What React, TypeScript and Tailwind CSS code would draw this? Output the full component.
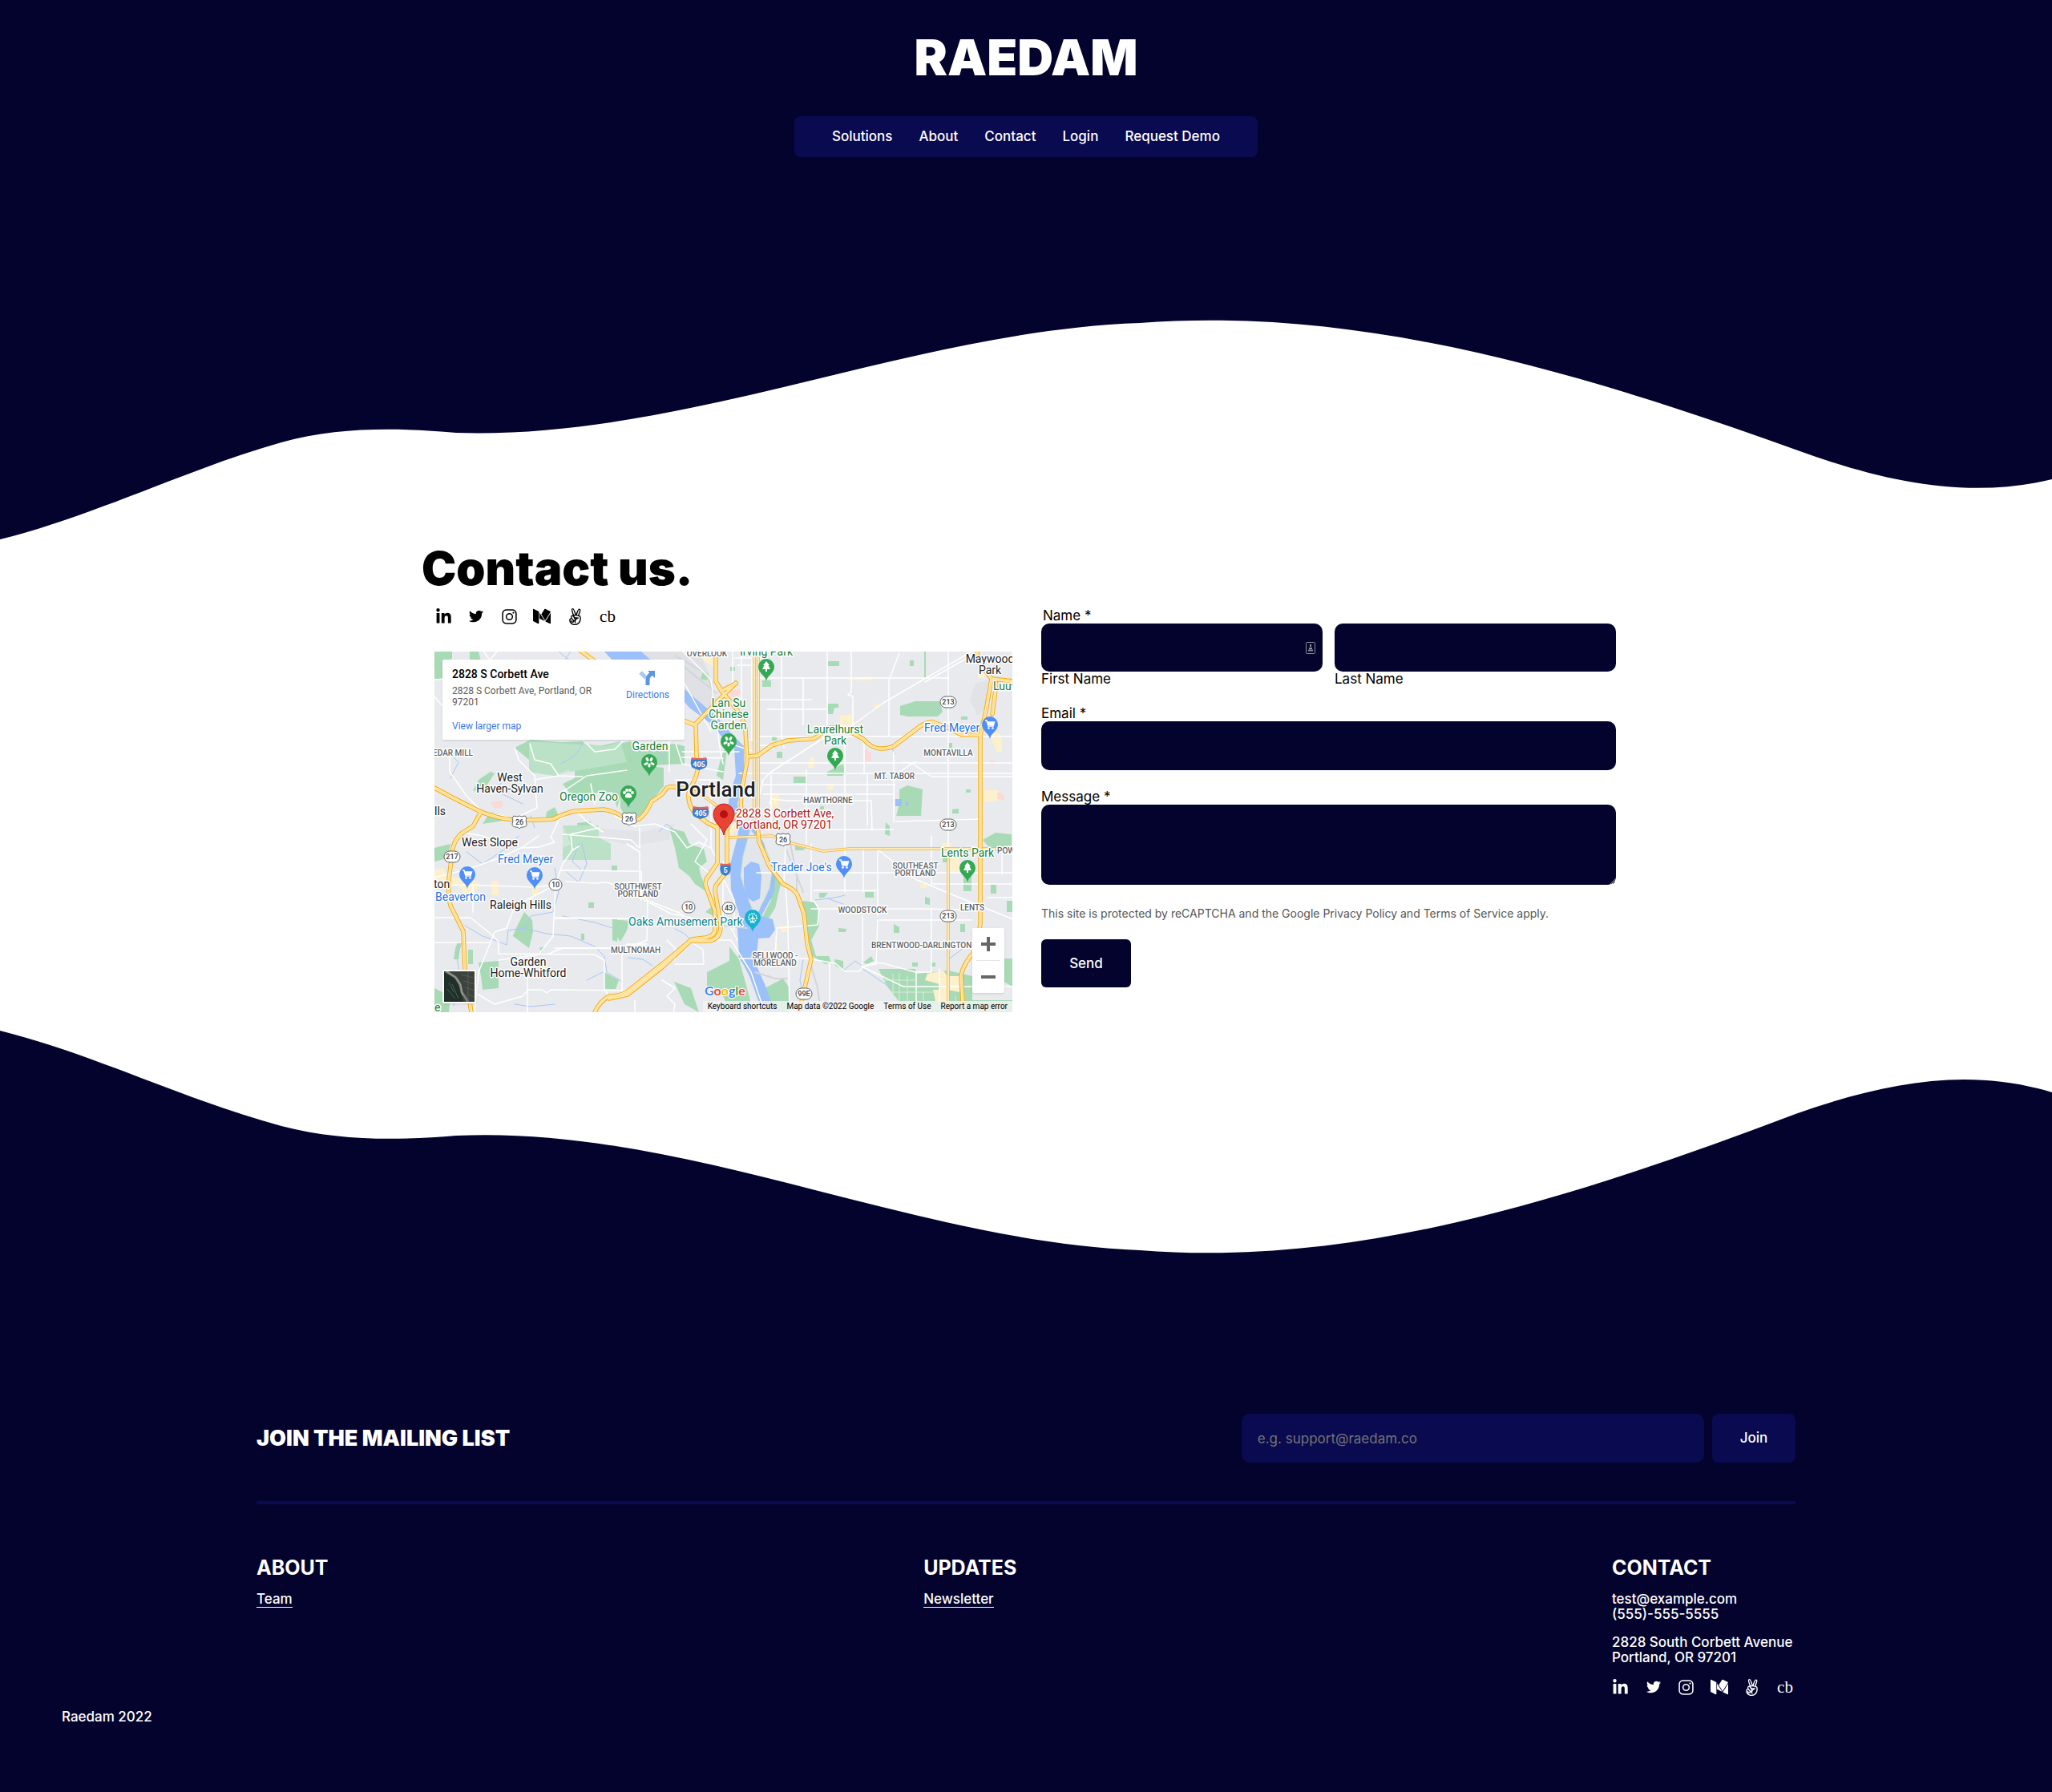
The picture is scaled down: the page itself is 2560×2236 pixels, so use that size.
import type { ReactNode } from "react";
import { FaAngellist, FaLinkedinIn, FaTwitter } from "react-icons/fa";
import { IoLogoInstagram } from "react-icons/io5";

type Pt = [number, number];

const TOP_WAVE =
  "M0 277C117 248 234 189 351 156C424 136 497 138 569 144C853 153 1138 17 1422 7C1695-14 1967 67 2240 165C2347 204 2453 228 2560 202V0H0Z";

const BOTTOM_WAVE =
  "M0 2C117 31 234 90 351 121C424 140 497 139 569 133C853 120 1138 265 1422 276C1695 298 1967 209 2240 106C2347 68 2453 46 2560 79V280H0Z";

function Wave({ shape }: { shape: string }) {
  return (
    <svg aria-hidden="true" viewBox="0 0 2560 280" preserveAspectRatio="none" className="block h-[280px] w-full bg-white">
      <path d={shape} fill="#03032e" />
    </svg>
  );
}

function MediumIcon() {
  return (
    <svg viewBox="0 0 1792 1792" fill="currentColor" className="h-[22px] w-[22px]">
      <path d="M597 421v1173q0 25-12.500 42.500t-36.500 17.500q-17 0-33-8l-465-233q-21-10-35.500-33.500t-14.500-46.500v-1140q0-20 10-34t29-14q14 0 44 15l511 256q3 3 3 5zM661 522l534 866-534-266v-600zM1792 540v1054q0 25-14 40.500t-38 15.500-47-13l-441-220zM1789 420q0 3-256.500 419.500t-300.500 487.500l-390-634 324-527q17-28 52-28 14 0 26 6l541 270q4 2 4 6z" />
    </svg>
  );
}

function SocialLinks() {
  const links: { name: string; icon: ReactNode }[] = [
    { name: "LinkedIn", icon: <FaLinkedinIn className="size-[21px]" /> },
    { name: "Twitter", icon: <FaTwitter className="size-[18px]" /> },
    { name: "Instagram", icon: <IoLogoInstagram className="size-[21px]" /> },
    { name: "Medium", icon: <MediumIcon /> },
    { name: "AngelList", icon: <FaAngellist className="size-[21px]" /> },
    { name: "Crunchbase", icon: <span className="font-['Liberation_Serif',serif] text-[21px] leading-5">cb</span> },
  ];
  return (
    <div className="flex h-6 items-center gap-[19px]">
      {links.map((l) => (
        <a key={l.name} href="#" aria-label={l.name} className="flex w-[22px] justify-center">
          {l.icon}
        </a>
      ))}
    </div>
  );
}

const FREEWAYS = [
  "M0 170L24 183 58 200Q80 209 101 210T148 209Q162 202 175 199L211 197Q224 199 235 206T255 209Q264 203 271 187L284 178 290 170Q296 167 303 170L325 171",
  "M58 200L48 218 35 226Q26 233 23 245L18 284Q17 305 20 317L36 349 38 397 46 450",
  "M181 -2L200 12",
  "M351 -2V37L358 49 373 67Q386 82 388 97L390 137 385 164Q381 180 383 200L365 214",
  "M376 39L326 90 327 130Q333 150 318 172 314 188 325 202L341 214 353 220",
  "M308 85L326 92",
  "M353 217V264L339 284 338 291 350 324V346Q350 355 338 357L321 359 288 387 241 424Q232 430 218 430 206 436 199 452",
  "M365 217V274L351 292 350 298 357 340Q358 360 341 361L319 361 284 394 241 428 218 433",
  "M391 131L403 130 421 117 441 111 471 109Q480 107 488 96 500 92 515 98L535 109Q545 121 557 121 567 121 573 118L601 97Q612 87 622 88L640 95 658 104 680 104",
  "M403 217L405 237 418 268 435 290Q450 297 453 304L461 327 465 364 470 384 458 437 455 452",
  "M676 -2L680 14 695 34 688 74 681 104V340L676 372Q660 388 657 404L660 452",
  "M695 34L722 37",
  "M701 40L696 78",
  "M358 49L376 40",
];

const ARTERIALS = [
  "M399 -2V216",
  "M404 -2V216",
  "M368 232L421 230 445 239 485 249 518 246 722 246",
  "M641 246V452",
  "M318 172Q340 180 360 200",
];

const STREETS = [
  "M401 33H641", "M415 72H490", "M403 106H722", "M403 117H430", "M403 139H721", "M380 152L430 152 722 152", "M410 166H575", "M410 178H573", "M420 184L440 186 545 186 546 223",
  "M433 -2V104L436 120", "M460 34V92", "M490 -2V94", "M520 -2V50L516 54 522 56V100", "M567 105V36L580 2", "M641 -2V246", "M573 125V212", "M512 105V152", "M536 108V152",
  "M670 0L560 64 520 93 490 105 420 150 410 160 404 186", "M670 5L612 38", "M512 152V300", "M464 148V240", "M420 154V216", "M540 217V152", "M420 184L418 190",
  "M401 60H470", "M575 212L681 209", "M490 222H573", "M585 138L597 140 620 156H721", "M573 155L600 137",
  "M402 276H721", "M473 298H553", "M553 247V330", "M553 247L600 284 650 305 722 334", "M553 335L551 390 533 393", "M535 245V300", "M534 330V390", "M470 321H600L670 322", "M555 335H670",
  "M427 345L478 341 480 322 474 312 470 311V240", "M427 345L425 380", "M438 290L441 340 443 450", "M438 240L436 288", "M380 383H465L500 389 512 399 530 399Q538 386 560 389L600 400",
  "M533 393L585 418H721", "M493 389V450", "M601 418V400H620V320", "M601 418V450", "M620 230V290H721", "M630 396V440", "M708 250V278", "M690 307H721", "M641 400V418",
  "M0 292L40 291 125 294 151 291", "M0 282L40 272 80 258 110 244 130 230", "M151 290L160 265 172 248 170 228 205 220", "M164 287L200 289 215 288 255 300 262 310 295 327 320 332",
  "M157 273L235 274 258 274V302L266 310 265 360 240 370H150", "M150 332L235 333 M265 310L310 328", "M151 291L148 355 130 378 80 385M150 333H250", "M151 291L100 318 90 345 75 350 55 400 50 450",
  "M0 332H45L70 352 80 362V377L200 378 212 385", "M0 363H70", "M48 292V325", "M212 385V420L220 435", "M140 378L160 370H270", "M117 422L110 430 75 440 50 425 M117 422L135 422 140 426 145 422 240 423", "M116 405V450",
  "M234 380V430 M250 435V450", "M234 380L240 365H265", "M300 385L300 370 290 360 M320 362L335 372 336 390H300", "M240 240L256 250V302L258 310", "M180 243L172 248 M256 220V245L245 235 160 228", "M284 410L300 420 290 430 300 440 298 452",
  "M0 56L20 80 40 95 M0 35L50 32 80 -2", "M60 -2L90 40 60 60", "M19 125V150L40 180 55 195", "M100 120L105 135 125 155 128 195 100 208 60 200", "M119 115L125 135 145 140 155 155 185 156M155 155L125 160",
  "M190 115L200 125 225 122 235 112", "M160 175L190 155 225 150 240 148 M195 165L200 190 M178 200L190 212 210 225 M175 199L155 210 145 232",
  "M145 232L150 238 130 244 110 245 M35 226L60 230 80 238", "M293 112V150 M301 115L309 140 360 150 M309 125H380 M309 132L360 133",
  "M225 205L250 218 275 215 300 225 315 245 330 238 345 245 M320 215L340 235 325 262 342 276 340 300", "M345 217V245L358 270", "M310 0L345 35 356 120 360 140 M300 18L345 100", "M345 217V160 M353 160H300",
  "M360 262V345 M360 283L374 310V347 M353 360L370 360 395 400 412 450 M370 345L378 360", "M372 0V40 M383 0V60 M396 10V110", "M375 8H415 M378 17H400", "M393 110L405 112 M375 117L400 125",
];

const PARKS = [
  "M0 0H22V8L12 22V34H0Z", "M44 0H55L58 12H44Z", "M120 110L215 118 245 112 250 120 300 115 312 118V140L270 142 245 170 232 180 228 195 222 175 170 178 160 165 175 158 175 145 160 150 150 155 118 150 118 135 100 120Z",
  "M120 115L145 122 160 138 170 150 190 145 230 150 240 138 232 112 205 118 195 126 185 112Z", "M232 150L262 142 286 145V168L268 190 258 205 240 208 232 195Z",
  "M55 160L70 150 75 152 62 172 48 174Z", "M140 200L150 194 155 205 145 212H138Z M178 214L195 212 196 236 180 228Z", "M160 217H205V232L220 240V260H160V245L170 240Z", "M293 220L312 225 318 240 336 246 340 262 330 270 332 278 340 300 325 290 318 280 305 270 300 245Z",
  "M102 345L112 325 122 335 123 350 118 370 98 355Z", "M222 334L243 336 240 348 232 362 225 352Z M222 334H228V362L222 360Z", "M55 388L80 386V420L60 422 58 405Z", "M0 420L20 430 18 450H0Z M60 215L70 200 95 208 80 212Z",
  "M26 370L29 363H33L30 384H24Z M42 372H48V390H42Z M183 352H187V360H183Z M192 313H199V320H192Z M221 267H228V274H221Z M131 370L137 368 134 376Z", "M212 400L230 410 226 421H212Z M345 319L353 318V332L338 325Z M340 400L370 385V450L355 420H340Z M299 412L320 420 330 450 312 440Z",
  "M368 368L380 384 398 450H358V440L368 430Z", "M378 380L400 388 412 420 435 408 443 420V450H418L400 410Z", "M404 265L425 270 432 290 425 320 400 360 402 345 420 310Z", "M459 311L476 313 478 322 480 342 470 360 476 380 492 380 495 388 488 390 465 376Z",
  "M491 12H505V18H491Z M593 11H598V18H593Z M611 0H613V34H611Z M369 19H375V24H369Z M409 36H420V44H409Z", "M581 68L600 62 630 62 634 75 628 81H590L581 79Z M491 65H504V70H499L497 78H491Z M657 81H665V85H657Z M421 105H427V111H421Z M427 125H434V133H427Z M641 114H646V121H641Z M448 156H465V164H448Z",
  "M490 150L510 140 512 152 509 155H490Z M580 172L590 167 609 172 607 205H576L580 190Z M663 172H669V176H663Z M646 197L654 196V202H646Z M481 193H486V197H481Z M563 213L568 218V230L562 228Z",
  "M684 235L700 226 720 228V244L702 250 690 242Z M660 275H670V299H660Z M694 291H701V302H694Z M612 306L618 308V316L612 315Z M537 300H548V307H537Z M480 301H491L486 307H480Z M573 340L580 344V351H573Z M504 345L514 346 513 350H504Z M656 340H662V350H656Z M714 311H721V325H714Z M634 258H640V263H634Z",
  "M554 396H600V402L641 398 671 405V435H721V450H590L565 418Z M690 383H721V418L690 400Z M596 388H603V393H596Z M619 388H625V393H619Z M535 388L545 380 548 386 540 390Z M499 384L510 386V397L500 392Z M450 242L463 246 460 248H450Z",
  "M352 155L358 130 366 115 360 160Z M335 25L342 28 340 36 332 34Z M0 245L20 240 16 258 0 262Z",
];

const WATER = [
  "M212 0H258L275 15 300 32 312 47 351 80 372 104 386 118 386 152 382 170 378 190 384 214 398 221 410 237 425 277 424 300 408 330 422 334 425 347 418 357 404 358 401 390 412 415 426 452H410L393 405 380 380 378 345 380 327 370 297 369 265 378 232 380 217 372 210 366 195 369 175 376 155 374 120 360 108 345 90 318 70 308 58 225 14Z",
  "M575 184H583V193H575Z M588 186L592 190 588 193Z",
];

const ISLANDS = ["M394 222L402 232 415 250 421 275 418 295 400 335 394 345 396 320 388 300 382 280 385 255Z"];
const ISLAND_LAGOONS = ["M395 262L405 265 408 280 406 308 398 312 388 306 386 290 386 270Z", "M408 316L416 304 410 325 402 332Z"];

const STREAMS = [
  "M170 0L150 28 120 34M185 115L175 130 158 140M155 0L170 12 200 20", "M22 130L30 138 20 158M90 155L80 168M85 178L110 190", "M38 342L60 355 75 360 90 366 92 348 110 345 140 352 170 355 200 368 212 380 215 400 234 412", "M150 270L155 300 148 325 120 330 108 352M165 275L180 288 190 265 184 240",
  "M180 240L172 262 183 272M160 330L200 338 222 345", "M280 225L290 215 298 222M40 250L60 265 90 245 105 230", "M475 310L500 307 512 304 M490 308L510 315", "M510 398L525 386 533 392 M533 395L570 420", "M640 385L660 370 680 362", "M242 382L260 384 272 392 M300 346L312 352 318 358", "M100 440L120 443 150 440 M190 410L210 400 M460 385L456 410 460 430", "M24 442L32 410 28 380 38 352",
  "M280 120L286 140M240 165L245 195M120 205L125 220", "M570 120L575 128",
];

const COMMERCIAL = [
  "M0 272L12 270 15 280 40 284 56 288 50 305H38L30 292 0 284Z", "M70 286H80V304H72Z M122 292H130V304H122Z M138 294L150 288 152 296Z", "M505 80L520 78 524 92 508 96Z M515 34L545 31V36H517Z M547 67L555 64 556 70H548Z M468 132H474V145H466Z M490 165H498V172H490Z M633 239H645V246H655V275H640V246H633Z M420 176L430 180V192L420 196Z",
  "M615 402L635 398 640 405H655V425L640 422 630 430V415L612 410Z M622 422H640V436H625Z M606 290H614V295H606Z M425 365H428V385H425Z M432 342H440V350H432Z M685 173H704V186L686 188Z M690 100H700L708 106V125H702Z M678 27H688V33H678Z M300 325L318 318 316 325Z M330 0L350 5V20L336 12Z M370 214L382 220 368 230Z",
];

const HOSPITALS = ["M70 188L84 186 86 194 75 196Z", "M537 119L545 128V137H537Z", "M370 48H382V52L374 60 369 56Z", "M703 175L711 180 711 186 702 184Z", "M693 136H699V141H694Z"];

const RAILS = "M300 5L340 28 350 60M310 18L352 52M444 240L452 280 452 306M436 240L460 300M340 340L390 345M400 400L425 408 440 408M470 392L478 420 482 450";

type LabelProps = { x: number; y: number; lines: string[]; step?: number; kind: string; anchor?: "start" | "middle" | "end" };

function kindClass(kind: string): string {
  switch (kind) {
    case "park":
      return "fill-[#188038] text-[14px]";
    case "shop":
      return "fill-[#1a73e8] text-[14px]";
    case "fun":
      return "fill-[#00838f] text-[14px]";
    case "area":
      return "fill-[#5f6368] text-[10px] font-medium";
    case "address":
      return "fill-[#b31412] text-[14px]";
    case "city":
      return "fill-[#202124] text-[26px] font-medium";
    default:
      return "fill-[#202124] text-[14px]";
  }
}

function Label({ x, y, lines, step = 14, kind, anchor = "middle" }: LabelProps) {
  return (
    <text textAnchor={anchor} className={kindClass(kind)} stroke="#fff" strokeWidth={3} strokeLinejoin="round" paintOrder="stroke">
      {lines.map((l, i) => (
        <tspan key={l} x={x} y={y + i * step}>
          {l}
        </tspan>
      ))}
    </text>
  );
}

const LABELS: LabelProps[] = [
  { x: 340, y: 6, lines: ["OVERLOOK"], kind: "area" },
  { x: 48, y: 130, lines: ["CEDAR MILL"], kind: "area", anchor: "end" },
  { x: 94, y: 162, lines: ["West", "Haven-Sylvan"], kind: "town" },
  { x: 156, y: 186, lines: ["Oregon Zoo"], kind: "park", anchor: "start" },
  { x: 269, y: 123, lines: ["Garden"], kind: "park" },
  { x: 0, y: 204, lines: ["lls"], kind: "town", anchor: "start" },
  { x: 351, y: 181, lines: ["Portland"], kind: "city" },
  { x: 367, y: 69, lines: ["Lan Su", "Chinese", "Garden"], kind: "park" },
  { x: 414, y: 5, lines: ["Irving Park"], kind: "park" },
  { x: 500, y: 102, lines: ["Laurelhurst", "Park"], kind: "park" },
  { x: 693, y: 14, lines: ["Maywood", "Park"], kind: "town" },
  { x: 697, y: 48, lines: ["Luuwit"], kind: "park", anchor: "start" },
  { x: 611, y: 100, lines: ["Fred Meyer"], kind: "shop", anchor: "start" },
  { x: 641, y: 130, lines: ["MONTAVILLA"], kind: "area" },
  { x: 574, y: 159, lines: ["MT. TABOR"], kind: "area" },
  { x: 491, y: 189, lines: ["HAWTHORNE"], kind: "area" },
  { x: 376, y: 207, lines: ["2828 S Corbett Ave,", "Portland, OR 97201"], kind: "address", anchor: "start" },
  { x: 34, y: 243, lines: ["West Slope"], kind: "town", anchor: "start" },
  { x: 79, y: 264, lines: ["Fred Meyer"], kind: "shop", anchor: "start" },
  { x: -1, y: 295, lines: ["ton"], kind: "town", anchor: "start" },
  { x: 1, y: 311, lines: ["Beaverton"], kind: "shop", anchor: "start" },
  { x: 69, y: 321, lines: ["Raleigh Hills"], kind: "town", anchor: "start" },
  { x: 254, y: 297, lines: ["SOUTHWEST", "PORTLAND"], step: 9, kind: "area" },
  { x: 251, y: 376, lines: ["MULTNOMAH"], kind: "area" },
  { x: 117, y: 392, lines: ["Garden", "Home-Whitford"], kind: "town" },
  { x: 242, y: 342, lines: ["Oaks Amusement Park"], kind: "fun", anchor: "start" },
  { x: 0, y: 449, lines: ["e"], kind: "park", anchor: "start" },
  { x: 420, y: 274, lines: ["Trader Joe's"], kind: "shop", anchor: "start" },
  { x: 600, y: 271, lines: ["SOUTHEAST", "PORTLAND"], step: 9, kind: "area" },
  { x: 632, y: 256, lines: ["Lents Park"], kind: "park", anchor: "start" },
  { x: 702, y: 252, lines: ["POWELL"], kind: "area", anchor: "start" },
  { x: 534, y: 326, lines: ["WOODSTOCK"], kind: "area" },
  { x: 671, y: 323, lines: ["LENTS"], kind: "area" },
  { x: 545, y: 370, lines: ["BRENTWOOD-DARLINGTON"], kind: "area", anchor: "start" },
  { x: 425, y: 383, lines: ["SELLWOOD -", "MORELAND"], step: 9, kind: "area" },
];

function Tree() {
  return <path d="M0-7L4-2H2.500L5 3H1V6H-1V3H-5L-2.500-2H-4Z" fill="#fff" />;
}
function Flower() {
  return (
    <g stroke="#fff" strokeWidth={3} strokeLinecap="round">
      <path d="M2-2.500L3-4.500M3 1.500L5 2.500M0 3V5M-3 1.500L-5 2.500M-2-2.500L-3-4.500" />
    </g>
  );
}
function Paw() {
  return (
    <g fill="#fff">
      <path d="M0-1Q5 1 4 5 0 6-4 5-5 1 0-1Z" />
      <circle cx={-5} cy={-1} r={2} />
      <circle cx={5} cy={-1} r={2} />
      <circle cx={-2} cy={-4} r={2} />
      <circle cx={2} cy={-4} r={2} />
    </g>
  );
}
function Cart() {
  return (
    <g>
      <path d="M-6-5H-4L-2 2H4L5.500-3H-3" fill="none" stroke="#fff" strokeWidth={1.500} />
      <path d="M-3-3H5.500L4 1H-2Z" fill="#fff" />
      <circle cx={-1.500} cy={4.500} r={1.300} fill="#fff" />
      <circle cx={3.500} cy={4.500} r={1.300} fill="#fff" />
    </g>
  );
}
function Wheel() {
  return (
    <g fill="none" stroke="#fff">
      <circle r={5} strokeWidth={1.500} strokeDasharray="2 1" />
      <path d="M0-3V6M-3 2L0 0 3 2M-3 6H3" strokeWidth={1.200} />
    </g>
  );
}

const PINS: { x: number; y: number; color: string; icon: ReactNode }[] = [
  { x: 268, y: 138, color: "#34a853", icon: <Flower /> },
  { x: 242, y: 177, color: "#34a853", icon: <Paw /> },
  { x: 367, y: 112, color: "#34a853", icon: <Flower /> },
  { x: 414, y: 19, color: "#34a853", icon: <Tree /> },
  { x: 500, y: 130, color: "#34a853", icon: <Tree /> },
  { x: 665, y: 270, color: "#34a853", icon: <Tree /> },
  { x: 693, y: 91, color: "#4f8ff7", icon: <Cart /> },
  { x: 41, y: 278, color: "#4f8ff7", icon: <Cart /> },
  { x: 125, y: 279, color: "#4f8ff7", icon: <Cart /> },
  { x: 511, y: 265, color: "#4f8ff7", icon: <Cart /> },
  { x: 397, y: 332, color: "#12b5cb", icon: <Wheel /> },
];

const ROUTES: { x: number; y: number; n: string }[] = [
  { x: 641, y: 63, n: "213" },
  { x: 641, y: 216, n: "213" },
  { x: 641, y: 330, n: "213" },
  { x: 22, y: 256, n: "217" },
  { x: 151, y: 291, n: "10" },
  { x: 317, y: 319, n: "10" },
  { x: 367, y: 320, n: "43" },
  { x: 461, y: 427, n: "99E" },
];

const US_ROUTES: Pt[] = [[106, 213], [243, 209], [435, 235]];
const INTERSTATES: { x: number; y: number; n: string; w: number }[] = [
  { x: 330, y: 140, n: "405", w: 10 },
  { x: 332, y: 201, n: "405", w: 10 },
  { x: 363, y: 272, n: "5", w: 7 },
];

function MapDrawing() {
  return (
    <svg
      role="img"
      aria-label="Map of Portland around 2828 S Corbett Ave"
      viewBox="0 0 721 450"
      preserveAspectRatio="xMidYMid slice"
      className="block h-full w-full bg-[#e8eaed] font-[Roboto,sans-serif]"
    >
      <g fill="#dcdee2">
        <path d="M250 0H330L348 40 345 90 310 60Z" opacity={0.8} />
        <path d="M200 220L260 225 300 215 292 235 250 242 210 235Z" opacity={0.5} />
        <path d="M675 40L690 35 688 70 678 80 668 60Z" opacity={0.6} />
        <path d="M190 155L230 150 225 175 195 178Z" opacity={0.5} />
      </g>
      {PARKS.map((d) => (
        <path key={d} d={d} fill="#a8dab5" />
      ))}
      <path d="M118 112L215 118 232 112 240 138 170 150 150 155 118 150ZM160 217H205V232L220 240V260H160Z" fill="#c3e6cd" opacity={0.7} />
      {COMMERCIAL.map((d) => (
        <path key={d} d={d} fill="#fdf0cd" />
      ))}
      {HOSPITALS.map((d) => (
        <path key={d} d={d} fill="#fad9d7" />
      ))}
      {WATER.map((d) => (
        <path key={d} d={d} fill="#9cc0f9" />
      ))}
      {ISLANDS.map((d) => (
        <path key={d} d={d} fill="#e2e5ea" stroke="#bfe3c9" strokeWidth={1} />
      ))}
      {ISLAND_LAGOONS.map((d) => (
        <path key={d} d={d} fill="#9cc0f9" />
      ))}
      <g fill="none" strokeLinejoin="round" strokeLinecap="round">
        <path d={RAILS} stroke="#d3d5d9" strokeWidth={2} />
        {STREAMS.map((d) => (
          <path key={d} d={d} stroke="#a9c7f7" strokeWidth={1} />
        ))}
        {STREETS.map((d) => (
          <path key={d} d={d} stroke="#fff" strokeWidth={1.500} />
        ))}
        <path d="M572 402V440M580 402V444M590 405V450M610 425V450M560 410H600M570 425H625M575 437H630M600 445H640M650 430V450" stroke="#d5eedb" strokeWidth={1} />
        {ARTERIALS.map((d) => (
          <path key={d} d={d} stroke="#f9b233" strokeWidth={3.500} />
        ))}
        {ARTERIALS.map((d) => (
          <path key={d} d={d} stroke="#fdeab5" strokeWidth={2} />
        ))}
        {FREEWAYS.map((d) => (
          <path key={d} d={d} stroke="#f9ab0a" strokeWidth={5.500} />
        ))}
        {FREEWAYS.map((d) => (
          <path key={d} d={d} stroke="#feebb5" strokeWidth={3.500} />
        ))}
        {FREEWAYS.map((d) => (
          <path key={d} d={d} stroke="#fcd27c" strokeWidth={0.800} />
        ))}
      </g>

      {ROUTES.map((r) => (
        <g key={`${r.x}-${r.y}`}>
          <rect x={r.x - (r.n.length > 2 ? 10 : 8)} y={r.y - 7} width={r.n.length > 2 ? 20 : 16} height={14} rx={7} fill="#fff" stroke="#5f6368" />
          <text x={r.x} y={r.y + 3} textAnchor="middle" className="fill-[#3c4043] text-[9px] font-medium">
            {r.n}
          </text>
        </g>
      ))}
      {US_ROUTES.map(([x, y]) => (
        <g key={`${x}-${y}`}>
          <path
            transform={`translate(${x} ${y})`}
            d="M-7-8Q-3-6 0-8 3-6 7-8L9-5Q7-2 9 2 9 6 4 6 1 6 0 8-1 6-4 6-9 6-9 2-7-2-9-5Z"
            fill="#fff"
            stroke="#5f6368"
          />
          <text x={x} y={y + 3} textAnchor="middle" className="fill-[#3c4043] text-[9px] font-medium">
            26
          </text>
        </g>
      ))}
      {INTERSTATES.map((s) => (
        <g key={`${s.x}-${s.y}`}>
          <path transform={`translate(${s.x} ${s.y})`} d={s.w === 10 ? "M-9-7H9Q12 1 8 5L0 8-8 5Q-12 1-9-7Z" : "M-6-7H6Q8 3 4 6L0 8-4 6Q-8 3-6-7Z"} fill="#3f7fca" />
          <path transform={`translate(${s.x} ${s.y})`} d={s.w === 10 ? "M-9-8Q0-6 9-8L10-5H-10Z" : "M-6-8Q0-6 6-8L7-5H-7Z"} fill="#e0665c" />
          <text x={s.x} y={s.y + 4} textAnchor="middle" className="fill-white text-[9px] font-bold">
            {s.n}
          </text>
        </g>
      ))}

      {LABELS.map((l) => (
        <Label key={`${l.x}-${l.y}`} {...l} />
      ))}

      {PINS.map((p) => (
        <g key={`${p.x}-${p.y}`} transform={`translate(${p.x} ${p.y})`}>
          <path d="M0 18C-1 11-10 8-10 0A10 10 0 0 1 10 0C10 8 1 11 0 18Z" fill={p.color} />
          {p.icon}
        </g>
      ))}
      <g transform="translate(361 203)">
        <path d="M0 26C-2 15-13 11-13 0A13 13 0 0 1 13 0C13 11 2 15 0 26Z" fill="#ea4335" stroke="#c5221f" strokeWidth={1} />
        <circle r={5} fill="#b31412" />
      </g>

      <text x={337} y={429} stroke="#fff" strokeWidth={2} paintOrder="stroke" className="font-[Lato,sans-serif] text-[16px] font-bold">
        <tspan fill="#4285f4">G</tspan>
        <tspan fill="#ea4335">o</tspan>
        <tspan fill="#fbbc05">o</tspan>
        <tspan fill="#4285f4">g</tspan>
        <tspan fill="#34a853">l</tspan>
        <tspan fill="#ea4335">e</tspan>
      </text>
    </svg>
  );
}

function SatelliteThumb() {
  return (
    <svg viewBox="0 0 38 38" className="block size-full bg-[#3d423c]">
      <path d="M0 0L14 10 20 22 24 38H0Z" fill="#1f2f2a" />
      <path d="M2 0L14 7 20 16 22 26 30 38" fill="none" stroke="#7d827c" strokeWidth={3} />
      <path d="M4 0L16 9 21 18 23 30" fill="none" stroke="#a3a7a2" strokeWidth={1} />
      <path d="M22 4L36 8M24 12L38 16M26 20L38 24M28 28L38 32M30 0V38M6 14L12 26M4 22L14 34M10 16L18 34" stroke="#565b54" strokeWidth={1} />
    </svg>
  );
}

function MapEmbed() {
  return (
    <div className="relative h-[450px] w-full overflow-hidden font-[Roboto,sans-serif]">
      <MapDrawing />
      <div className="absolute left-[10px] top-[10px] flex h-[100px] w-[302px] justify-between rounded-[2px] bg-white pl-3 pr-[19px] pt-2 shadow">
        <div className="w-[190px]">
          <div className="text-sm font-medium leading-5 text-black">2828 S Corbett Ave</div>
          <div className="mt-1 text-xs leading-[14px] text-[#5b5b5b]">2828 S Corbett Ave, Portland, OR 97201</div>
          <a href="#" className="mt-[15px] block text-xs leading-4 text-[#3a78e7]">
            View larger map
          </a>
        </div>
        <a href="#" className="flex flex-col items-center pt-1 text-xs leading-4 text-[#3a78e7]">
          <svg viewBox="0 0 22 22" className="size-[22px]">
            <path d="M2 4L9 11" stroke="#a9c8f5" strokeWidth={5} />
            <path d="M11 20V13Q11 10 13 8L16 5" fill="none" stroke="#5a95e6" strokeWidth={5} />
            <path d="M11 2H20V11Z" fill="#5a95e6" />
          </svg>
          <span className="mt-[2px]">Directions</span>
        </a>
      </div>
      <button type="button" aria-label="Show satellite imagery" className="absolute bottom-[11px] left-[10px] size-[42px] rounded-[2px] border-2 border-white shadow">
        <SatelliteThumb />
      </button>
      <div className="absolute bottom-6 right-[10px] flex h-[81px] w-10 flex-col items-center rounded-[2px] bg-white shadow">
        <button type="button" aria-label="Zoom in" className="flex w-full flex-1 items-center justify-center">
          <svg viewBox="0 0 18 18" className="size-[18px]">
            <path d="M7 0H11V7H18V11H11V18H7V11H0V7H7Z" fill="#666" />
          </svg>
        </button>
        <div className="h-px w-[30px] bg-[#e6e6e6]" />
        <button type="button" aria-label="Zoom out" className="flex w-full flex-1 items-center justify-center">
          <svg viewBox="0 0 18 18" className="size-[18px]">
            <path d="M0 7H18V11H0Z" fill="#666" />
          </svg>
        </button>
      </div>
      <div className="absolute bottom-0 right-0 flex h-[14px] items-center gap-3 bg-[#f5f5f5]/80 px-[6px] text-[10px] leading-[14px] text-black">
        <button type="button">Keyboard shortcuts</button>
        <span>Map data ©2022 Google</span>
        <a href="#">Terms of Use</a>
        <a href="#">Report a map error</a>
      </div>
    </div>
  );
}

function ContactForm() {
  return (
    <form className="flex flex-col text-[17px] leading-[19px]" onSubmit={(e) => e.preventDefault()}>
      <fieldset>
        <legend className="px-[2px]">Name *</legend>
        <div className="grid grid-cols-2 gap-[15px]">
          <div className="flex flex-col">
            <div className="relative">
              <input id="first" type="text" className="block h-[60px] w-full rounded-[10px] bg-[#03032e] px-5 text-white" />
              <svg aria-hidden="true" viewBox="0 0 12 15" className="absolute right-[9px] top-[23px] h-[15px] w-3" fill="none" stroke="#8f8f9d">
                <rect x={0.500} y={0.500} width={11} height={14} rx={1} />
                <path d="M6 3V6M4 8H8M3 10.500H9" strokeWidth={2} />
              </svg>
            </div>
            <label htmlFor="first">First Name</label>
          </div>
          <div className="flex flex-col">
            <input id="last" type="text" className="block h-[60px] w-full rounded-[10px] bg-[#03032e] px-5 text-white" />
            <label htmlFor="last">Last Name</label>
          </div>
        </div>
      </fieldset>
      <label htmlFor="email" className="mt-6">
        Email *
      </label>
      <input id="email" type="email" className="h-[61px] rounded-[10px] bg-[#03032e] px-5 text-white" />
      <label htmlFor="message" className="mt-6">
        Message *
      </label>
      <textarea id="message" className="h-[100px] resize-y rounded-[10px] bg-[#03032e] px-5 py-4 text-white" />
      <p className="mt-[26px] text-[14px] leading-5 text-[#555]">
        This site is protected by reCAPTCHA and the Google Privacy Policy and Terms of Service apply.
      </p>
      <button type="submit" className="mt-[22px] h-[60px] w-28 rounded-md bg-[#03032e] font-medium text-white">
        Send
      </button>
    </form>
  );
}

export default function App() {
  return (
    <div className="min-h-screen bg-[#03032e] font-[Inter,sans-serif] text-[17px] text-white">
      <header className="flex h-[396px] flex-col items-center pt-10">
        <a href="#" className="text-[62px] font-black leading-[64px]">
          RAEDAM
        </a>
        <nav className="mt-[41px] flex h-[51px] items-center gap-[33px] rounded-lg bg-[#0a0a50] px-[47px] font-medium">
          <a href="#">Solutions</a>
          <a href="#">About</a>
          <a href="#">Contact</a>
          <a href="#">Login</a>
          <a href="#">Request Demo</a>
        </nav>
      </header>

      <Wave shape={TOP_WAVE} />

      <main className="bg-white text-black">
        <div className="mx-auto grid max-w-[1508px] grid-cols-2 pb-[21px]">
          <section>
            <h1 className="text-[58px] font-black leading-[66px]">Contact us.</h1>
            <div className="pl-4 pr-[17px]">
              <div className="mt-[15px]">
                <SocialLinks />
              </div>
              <div className="mt-8">
                <MapEmbed />
              </div>
            </div>
          </section>
          <section className="pl-[19px] pr-[18px] pt-[83px]">
            <ContactForm />
          </section>
        </div>
      </main>

      <Wave shape={BOTTOM_WAVE} />

      <footer className="pb-[84px] pt-[200px]">
        <div className="mx-auto w-3/4">
          <div className="flex items-center justify-between border-b-4 border-[#0a0a50] pb-12">
            <h2 className="text-[27px] font-black leading-[30px]">JOIN THE MAILING LIST</h2>
            <form className="flex w-[36%] gap-[10px]" onSubmit={(e) => e.preventDefault()}>
              <input
                type="email"
                aria-label="Email address"
                placeholder="e.g. support@raedam.co"
                className="h-[61px] min-w-0 flex-1 rounded-[10px] bg-[#0a0a50] px-5 placeholder:text-[#757575]"
              />
              <button type="submit" className="h-[61px] w-[104px] rounded-lg bg-[#0a0a50] font-medium">
                Join
              </button>
            </form>
          </div>
          <div className="mt-16 flex justify-between font-medium leading-[19px]">
            <section>
              <h3 className="text-[25px] font-bold leading-[30px]">ABOUT</h3>
              <a href="#" className="mt-[15px] inline-block border-b border-white">
                Team
              </a>
            </section>
            <section>
              <h3 className="text-[25px] font-bold leading-[30px]">UPDATES</h3>
              <a href="#" className="mt-[15px] inline-block border-b border-white">
                Newsletter
              </a>
            </section>
            <section className="w-[229px]">
              <h3 className="text-[25px] font-bold leading-[30px]">CONTACT</h3>
              <p className="mt-[15px]">
                test@example.com
                <br />
                (555)-555-5555
              </p>
              <p className="mt-4">
                2828 South Corbett Avenue
                <br />
                Portland, OR 97201
              </p>
              <div className="mt-[15px]">
                <SocialLinks />
              </div>
            </section>
          </div>
        </div>
        <p className="mt-4 px-[77px] font-medium leading-[19px]">Raedam 2022</p>
      </footer>
    </div>
  );
}
